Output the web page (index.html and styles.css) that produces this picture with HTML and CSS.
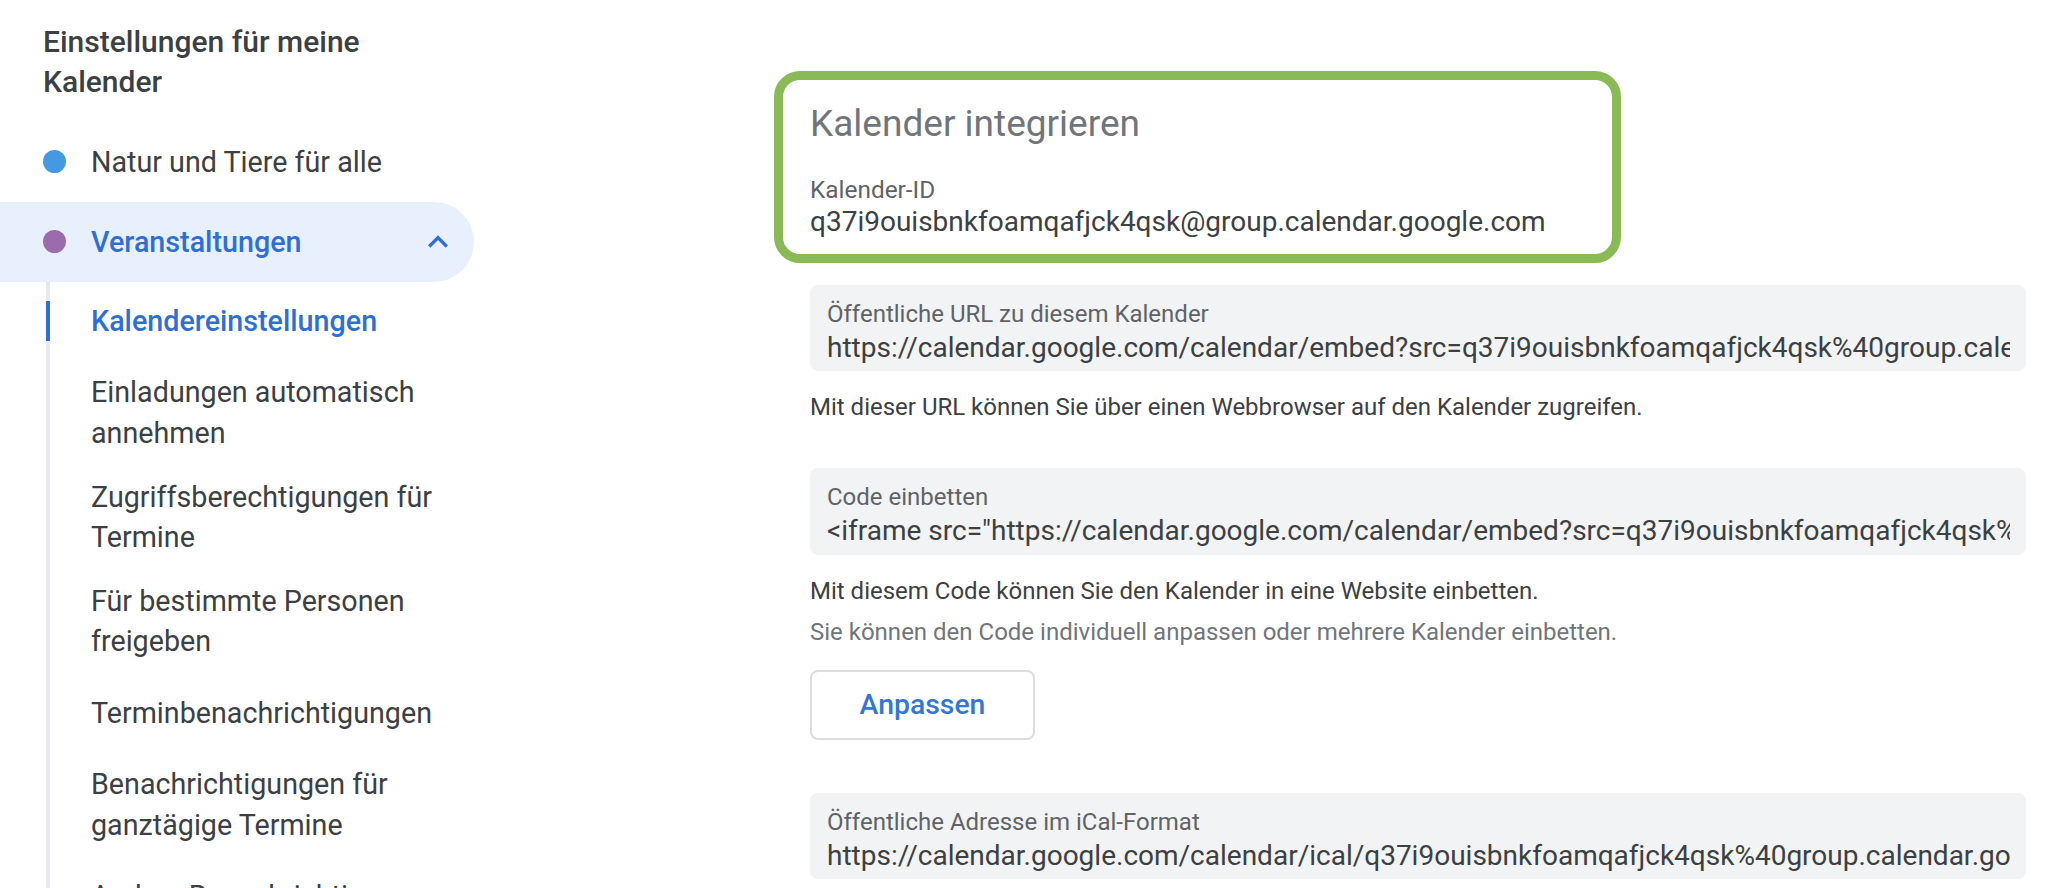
FILE: index.html
```html
<!DOCTYPE html>
<html lang="de">
<head>
<meta charset="utf-8">
<title>Kalendereinstellungen</title>
<link rel="stylesheet" href="styles.css">
</head>
<body>
<div class="page">
  <aside class="sidebar">
    <h2 class="side-title">Einstellungen für meine Kalender</h2>
    <div class="cal-row">
      <span class="dot dot-blue"></span>
      <span class="cal-name">Natur und Tiere für alle</span>
    </div>
    <div class="cal-row cal-row-active">
      <span class="dot dot-purple"></span>
      <span class="cal-name">Veranstaltungen</span>
      <svg class="chevron" viewBox="0 0 24 24" aria-hidden="true"><path d="M7.41 15.41L12 10.83l4.59 4.58L18 14l-6-6-6 6z"/></svg>
    </div>
    <ul class="sub-list">
      <li class="sub-item sub-item-active">Kalendereinstellungen</li>
      <li class="sub-item">Einladungen automatisch annehmen</li>
      <li class="sub-item">Zugriffsberechtigungen für Termine</li>
      <li class="sub-item">Für bestimmte Personen freigeben</li>
      <li class="sub-item">Terminbenachrichtigungen</li>
      <li class="sub-item">Benachrichtigungen für ganztägige Termine</li>
      <li class="sub-item">Andere Benachrichtigungen</li>
    </ul>
  </aside>

  <main class="content">
    <section class="highlight">
      <h1 class="section-title">Kalender integrieren</h1>
      <div class="id-label">Kalender-ID</div>
      <div class="id-value">q37i9ouisbnkfoamqafjck4qsk@group.calendar.google.com</div>
    </section>

    <div class="field">
      <div class="field-label">Öffentliche URL zu diesem Kalender</div>
      <div class="field-value">https://calendar.google.com/calendar/embed?src=q37i9ouisbnkfoamqafjck4qsk%40group.calendar.google.com&amp;ctz=Europe%2FBerlin</div>
    </div>
    <p class="hint">Mit dieser URL können Sie über einen Webbrowser auf den Kalender zugreifen.</p>

    <div class="field field-spaced">
      <div class="field-label">Code einbetten</div>
      <div class="field-value">&lt;iframe src="https://calendar.google.com/calendar/embed?src=q37i9ouisbnkfoamqafjck4qsk%40group.calendar.google.com&amp;ctz=Europe%2FBerlin" style="border: 0" width="800" height="600" frameborder="0" scrolling="no"&gt;&lt;/iframe&gt;</div>
    </div>
    <p class="hint">Mit diesem Code können Sie den Kalender in eine Website einbetten.</p>
    <p class="hint hint-secondary">Sie können den Code individuell anpassen oder mehrere Kalender einbetten.</p>

    <button class="btn-outline" type="button">Anpassen</button>

    <div class="field field-ical">
      <div class="field-label">Öffentliche Adresse im iCal-Format</div>
      <div class="field-value">https://calendar.google.com/calendar/ical/q37i9ouisbnkfoamqafjck4qsk%40group.calendar.google.com/public/basic.ics</div>
    </div>
  </main>
</div>
</body>
</html>
```

FILE: styles.css
```css
* {
  box-sizing: border-box;
}

html,
body {
  margin: 0;
  padding: 0;
  background: #ffffff;
}

body {
  font-family: Roboto, "Liberation Sans", Arial, sans-serif;
  color: #3c4043;
  height: 888px;
  overflow: hidden;
}

.page {
  display: flex;
  align-items: flex-start;
  height: 888px;
  overflow: hidden;
}

/* ---------- Sidebar ---------- */

.sidebar {
  width: 474px;
  flex: 0 0 474px;
}

.side-title {
  margin: 0;
  padding: 21.7px 30px 0 43px;
  font-size: 30px;
  line-height: 40.6px;
  font-weight: 500;
  color: #3c4043;
}

.cal-row {
  display: flex;
  align-items: center;
  height: 80px;
  padding: 0 16px 0 43px;
  gap: 25px;
  font-size: 28.7px;
  line-height: 40.6px;
  color: #3c4043;
}

.side-title + .cal-row {
  margin-top: 19px;
}

.cal-row-active {
  background: #e8f0fe;
  border-radius: 0 40px 40px 0;
  color: #2f6fd4;
  font-weight: 500;
}

.dot {
  width: 23px;
  height: 23px;
  border-radius: 50%;
  flex: 0 0 23px;
}

.dot-blue {
  background: #4499e0;
}

.dot-purple {
  background: #9b6bae;
}

.chevron {
  width: 40px;
  height: 40px;
  margin-left: auto;
  fill: #2f6fd4;
}

.sub-list {
  list-style: none;
  margin: 0 0 0 46px;
  padding: 0;
  border-left: 4px solid #e8e8ee;
}

.sub-item {
  position: relative;
  display: flex;
  align-items: center;
  min-height: 79px;
  padding: 11.5px 16px 11.5px 41px;
  font-size: 28.7px;
  line-height: 40.6px;
  color: #3c4043;
}

.sub-item-active {
  color: #2f6fd4;
  font-weight: 500;
}

.sub-item-active::before {
  content: "";
  position: absolute;
  left: -4px;
  top: 50%;
  width: 4px;
  height: 40px;
  margin-top: -20px;
  background: #2f6fd4;
}

/* ---------- Main content ---------- */

.content {
  flex: 1 1 auto;
  min-width: 0;
  padding: 71px 22px 0 336px;
}

.highlight {
  width: 847px;
  margin-left: -36px;
  border: 9px solid #8aba56;
  border-radius: 26px;
  padding: 22px 24px 18px 27px;
  background: #ffffff;
}

.section-title {
  margin: 0;
  font-size: 37px;
  line-height: 44px;
  font-weight: 400;
  color: #70757a;
}

.id-label {
  margin-top: 27.7px;
  font-size: 24.4px;
  line-height: 32px;
  color: #5f6368;
}

.id-value {
  font-size: 28px;
  line-height: 28px;
  padding-top: 2px;
  color: #3c4043;
  white-space: nowrap;
}

.field {
  margin-top: 22px;
  background: #f1f3f4;
  border-radius: 8px;
  padding: 13px 16px 5.5px 17px;
  overflow: hidden;
}

.field-spaced {
  margin-top: 45px;
}

.field-ical {
  margin-top: 53px;
}

.field-label {
  font-size: 24px;
  line-height: 32px;
  color: #5f6368;
  white-space: nowrap;
}

.field-value {
  font-size: 28px;
  line-height: 36px;
  color: #3c4043;
  white-space: nowrap;
  overflow: hidden;
}

.hint {
  margin: 20px 0 0;
  font-size: 24px;
  line-height: 32px;
  color: #3c4043;
}

.hint-secondary {
  margin-top: 9px;
  color: #70757a;
}

.btn-outline {
  display: flex;
  align-items: center;
  justify-content: center;
  width: 225px;
  height: 70px;
  margin-top: 22px;
  padding: 0;
  background: #ffffff;
  border: 2px solid #dadce0;
  border-radius: 8px;
  font-family: Roboto, "Liberation Sans", Arial, sans-serif;
  font-size: 28.4px;
  font-weight: 500;
  color: #3476d6;
  cursor: pointer;
}
```
